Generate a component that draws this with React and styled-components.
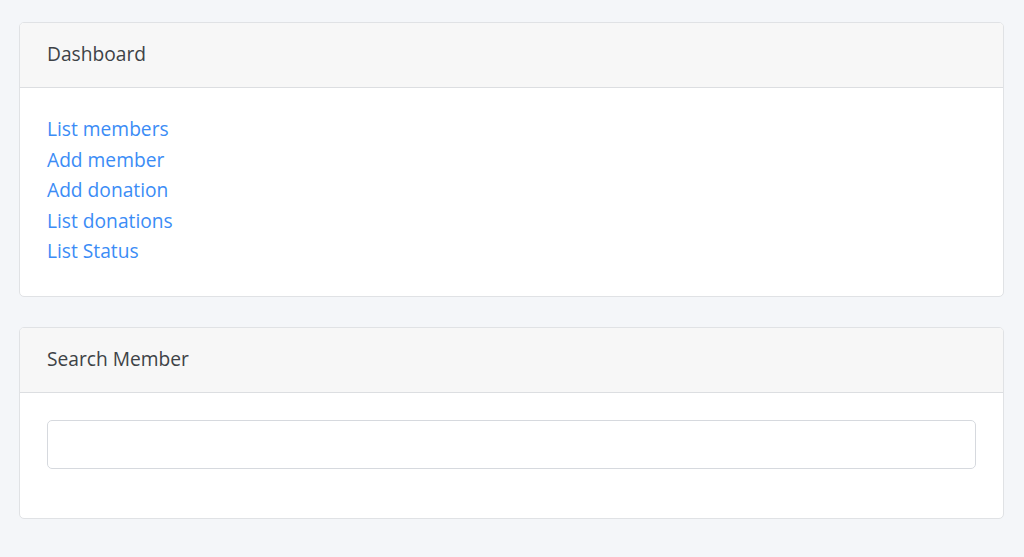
import React from "react";
import styled, { createGlobalStyle } from "styled-components";

const Global = createGlobalStyle`
  html, body { margin: 0; padding: 0; }
  body {
    background: #f4f6f9;
    font-family: "Open Sans", Lato, sans-serif;
    font-size: 19.2px;
    line-height: 1.6;
    color: #212529;
  }
  * { box-sizing: border-box; }
`;

const Page = styled.main`
  padding: 22px 20px 22px 19px;
  display: flex;
  flex-direction: column;
  gap: 30px;
`;

const Card = styled.section`
  background: #fff;
  border: 1px solid #e0e2e5;
  border-radius: 5px;
  overflow: hidden;
`;

const CardHeader = styled.div`
  background: #f7f7f7;
  border-bottom: 1px solid #dcdee1;
  padding: 15px 27px 18px;
  color: #3d4246;
  line-height: 31px;
`;

const CardBody = styled.div`
  padding: 26px 27px ${(p) => p.$bottom || 29}px;
  display: flex;
  flex-direction: column;
`;

const Link = styled.a`
  color: #3b8cf6;
  text-decoration: none;
  line-height: 30.6px;
  align-self: flex-start;
`;

const Input = styled.input`
  display: block;
  width: 100%;
  height: 49px;
  margin-top: 1px;
  border: 1px solid #d6d9de;
  border-radius: 5px;
  padding: 8px 16px;
  font: inherit;
  background: #fff;
  outline: none;
`;

const links = ["List members", "Add member", "Add donation", "List donations", "List Status"];

export default function App() {
  return (
    <>
      <Global />
      <Page>
        <Card>
          <CardHeader>Dashboard</CardHeader>
          <CardBody>
            {links.map((l) => (
              <Link key={l} href="#">{l}</Link>
            ))}
          </CardBody>
        </Card>
        <Card>
          <CardHeader>Search Member</CardHeader>
          <CardBody $bottom={49}>
            <Input type="text" />
          </CardBody>
        </Card>
      </Page>
    </>
  );
}
